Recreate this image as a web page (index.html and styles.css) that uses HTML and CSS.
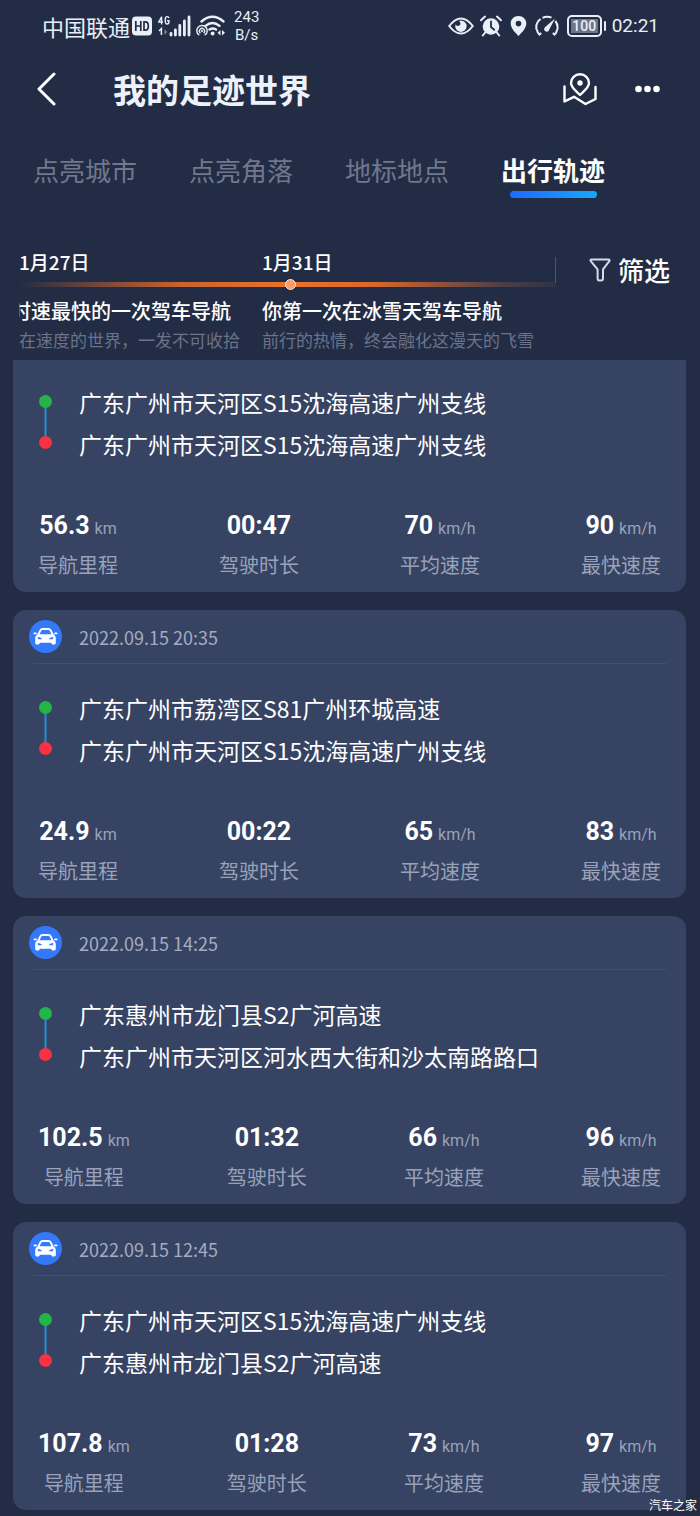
FILE: index.html
```html
<!DOCTYPE html>
<html lang="zh-CN">
<head>
<meta charset="utf-8">
<meta name="viewport" content="width=device-width, initial-scale=1">
<title>我的足迹世界</title>
<link rel="stylesheet" href="styles.css">
</head>
<body>
<svg class="sprite" aria-hidden="true">
  <symbol id="car" viewBox="0 0 33 33">
    <circle cx="16.5" cy="16.5" r="16.5" fill="#3478fb"/>
    <path d="M9 15.5 L11.2 10.6 Q12 9 13.6 9 H19.4 Q21 9 21.8 10.6 L24 15.5" fill="none" stroke="#fff" stroke-width="1.9" stroke-linejoin="round"/>
    <path d="M5.4 13.4 H7 M26 13.4 H27.6" stroke="#fff" stroke-width="1.8" stroke-linecap="round"/>
    <path fill="#fff" fill-rule="evenodd" d="M8.8 14.2 H24.2 Q26.8 15.4 26.8 18 V23 Q26.8 24.4 25.4 24.4 H23.6 Q22.4 24.4 22.2 22.8 H10.8 Q10.6 24.4 9.4 24.4 H7.6 Q6.2 24.4 6.2 23 V18 Q6.2 15.4 8.8 14.2Z M8.6 17 L9.2 19.2 H13 Q12.4 17.2 8.6 17Z M24.4 17 L23.8 19.2 H20 Q20.6 17.2 24.4 17Z"/>
  </symbol>
  <symbol id="route" viewBox="0 0 13 55">
    <path d="M6.5 8 V46" stroke="#2591cf" stroke-width="2"/>
    <circle cx="6.5" cy="6.5" r="6.5" fill="#23b548"/>
    <circle cx="6.5" cy="47.5" r="6.5" fill="#fb3041"/>
  </symbol>
</svg>

<div class="status-bar">
  <span class="carrier">中国联通</span>
  <svg class="icon-hd" viewBox="0 0 20 20" aria-label="HD"><rect x="0" y="0.5" width="20" height="19" rx="4" fill="#e9eef8"/><path d="M3.8 5 V15 M8.8 5 V15 M3.8 10 H8.8 M12 5.8 H13.4 Q16.3 5.8 16.3 10 Q16.3 14.2 13.4 14.2 H12 Z" fill="none" stroke="#222d45" stroke-width="1.7"/></svg>
  <svg class="icon-signal" viewBox="0 0 33 22" aria-label="4G">
    <path d="M3.6 9.5 V1.8 L0.8 7 H5 M11 3.2 Q10.6 1.6 9 1.6 Q7.2 1.6 7.2 5.3 Q7.2 9 9 9 Q11 9 11 6.8 V5.8 H9" fill="none" stroke="#e9eef8" stroke-width="1.4"/>
    <path d="M1 16 L3.4 13.6 V20" fill="none" stroke="#e9eef8" stroke-width="1.5"/><path d="M6.5 14 V20 L9.3 17Z" fill="#76809a"/>
    <path d="M13 18.5 V20 M17.4 15 V20 M21.8 10.5 V20 M26.4 6 V20 M31 2 V20" stroke="#e9eef8" stroke-width="2.8" stroke-linecap="round"/>
  </svg>
  <svg class="icon-wifi" viewBox="0 0 30 22" aria-hidden="true">
    <g fill="none" stroke="#e9eef8" stroke-linecap="round"><path d="M5.5 6.5 Q16.5 -2.8 27.5 6.5 M9.5 10.8 Q16.5 5 23.5 10.8 M13.5 14.5 Q16.8 12.4 20 14.5" stroke-width="2.4"/><path d="M2.8 19.8 A5.2 5.2 0 1 1 9.2 19.8 M4 17.7 A2.6 2.6 0 1 1 8 17.7" stroke-width="1.4"/></g>
    <circle cx="6" cy="16" r="1.1" fill="#e9eef8"/><circle cx="16.6" cy="18.5" r="2" fill="#e9eef8"/><path d="M24.5 15 V20.5 L21.5 17.8Z M26 15 V20.5 L29 17.8Z" fill="#e9eef8"/>
  </svg>
  <span class="net-speed">243<br>B/s</span>
  <div class="status-right">
    <svg class="icon-eye" viewBox="0 0 26 20" aria-hidden="true"><path d="M1.2 10 Q7 2.4 13 2.4 T24.8 10 Q19 17.6 13 17.6 T1.2 10Z" fill="none" stroke="#e9eef8" stroke-width="2"/><path d="M13 4.5 A5.7 5.7 0 1 1 7.5 8.5 Q8.5 10.4 10.8 9.8 Q12.9 9.2 12.4 7 Q12 5.3 11 5Z" fill="#e9eef8"/></svg>
    <svg class="icon-alarm" viewBox="0 0 22 22" aria-hidden="true"><circle cx="11" cy="11.5" r="8.3" fill="#e9eef8"/><path d="M1 5.2 L5 1.6 M21 5.2 L17 1.6 M5.2 17.5 L2.8 20.5 M16.8 17.5 L19.2 20.5" stroke="#e9eef8" stroke-width="2" stroke-linecap="round"/><path d="M11 6.5 V12 L14.2 14.8" fill="none" stroke="#222d45" stroke-width="1.8" stroke-linecap="round"/></svg>
    <svg class="icon-pin" viewBox="0 0 17 22" aria-hidden="true"><path fill="#e9eef8" fill-rule="evenodd" d="M8.5 1 C13 1 16.3 4.3 16.3 8.6 C16.3 13.4 11.5 18 8.5 21 C5.5 18 0.7 13.4 0.7 8.6 C0.7 4.3 4 1 8.5 1Z M8.5 5.8 A2.8 2.8 0 1 0 8.5 11.4 A2.8 2.8 0 1 0 8.5 5.8Z"/></svg>
    <svg class="icon-gauge" viewBox="0 0 24 22" aria-hidden="true"><path d="M16.5 2.6 A10.6 10.6 0 0 0 7.5 2.8 M5.6 4 A10.6 10.6 0 0 0 1.5 14.5 M1.8 14.5 Q2.4 17.6 4.4 19.6 L6.2 18 M20.3 6 A10.4 10.4 0 0 1 22.4 14.5 M22.2 14.5 Q21.6 17.6 19.6 19.6 L17.8 18" fill="none" stroke="#e9eef8" stroke-width="2"/><path d="M20 3.5 L14.3 14.6 A2.6 2.6 0 1 1 10.2 12Z" fill="#e9eef8"/></svg>
    <span class="battery"><span class="battery-level">100</span></span>
    <time class="clock">02:21</time>
  </div>
</div>

<header class="app-header">
  <button class="icon-button" aria-label="返回"><svg class="icon-back" viewBox="0 0 19 34"><path d="M17 2 L2 17 L17 32" fill="none" stroke="#fff" stroke-width="3" stroke-linecap="round" stroke-linejoin="round"/></svg></button>
  <h1 class="page-title">我的足迹世界</h1>
  <button class="icon-button" aria-label="地图"><svg class="icon-map" viewBox="0 0 34 33"><g fill="none" stroke="#fff" stroke-width="2.4" stroke-linecap="round" stroke-linejoin="round"><path d="M17 22 C13 18 8 14.5 8 10 A9 8.7 0 0 1 26 10 C26 14.5 21 18 17 22Z"/><path d="M1.5 13.5 V28.5 L11 23.8 L22.5 31 L32.5 26 V14"/></g><circle cx="17" cy="10" r="2.7" fill="#fff"/></svg></button>
  <button class="icon-button" aria-label="更多"><svg class="icon-more" viewBox="0 0 25 8"><circle cx="3.5" cy="4" r="3.3" fill="#fff"/><circle cx="12.5" cy="4" r="3.3" fill="#fff"/><circle cx="21.5" cy="4" r="3.3" fill="#fff"/></svg></button>
</header>

<nav class="tabs">
  <button class="tab">点亮城市</button>
  <button class="tab">点亮角落</button>
  <button class="tab">地标地点</button>
  <button class="tab tab-active" aria-current="page">出行轨迹</button>
</nav>

<section class="highlights">
  <div class="timeline">
    <div class="dates"><time>1月27日</time><time>1月31日</time></div>
    <div class="track"><span class="track-dot"></span></div>
    <div class="moments">
      <article class="moment moment-past"><h2 class="moment-title"><span>时速最快的一次驾车导航</span></h2><p class="moment-note">在速度的世界，一发不可收拾</p></article>
      <article class="moment"><h2 class="moment-title">你第一次在冰雪天驾车导航</h2><p class="moment-note">前行的热情，终会融化这漫天的飞雪</p></article>
    </div>
  </div>
  <button class="filter"><svg class="icon-filter" viewBox="0 0 22 24" aria-hidden="true"><path d="M2.6 1.5 H19.4 Q21.2 1.5 20.3 3.2 L14 11.4 V20.5 Q14 22.4 12 22.4 H10.4 Q8.6 22.4 8.6 20.5 V11.4 L1.8 3.2 Q0.8 1.5 2.6 1.5Z" fill="none" stroke="#d5daea" stroke-width="2" stroke-linejoin="round"/></svg>筛选</button>
</section>

<main class="trips">
  <article class="trip trip-clipped">
    <div class="route"><svg class="route-mark" aria-hidden="true"><use href="#route"/></svg><div class="places"><p>广东广州市天河区S15沈海高速广州支线</p><p>广东广州市天河区S15沈海高速广州支线</p></div></div>
    <dl class="stats">
      <div class="stat"><dt>导航里程</dt><dd>56.3<small>km</small></dd></div>
      <div class="stat"><dt>驾驶时长</dt><dd>00:47</dd></div>
      <div class="stat"><dt>平均速度</dt><dd>70<small>km/h</small></dd></div>
      <div class="stat"><dt>最快速度</dt><dd>90<small>km/h</small></dd></div>
    </dl>
  </article>
  <article class="trip">
    <div class="trip-head"><svg class="icon-car" aria-hidden="true"><use href="#car"/></svg><time>2022.09.15 20:35</time></div>
    <div class="route"><svg class="route-mark" aria-hidden="true"><use href="#route"/></svg><div class="places"><p>广东广州市荔湾区S81广州环城高速</p><p>广东广州市天河区S15沈海高速广州支线</p></div></div>
    <dl class="stats">
      <div class="stat"><dt>导航里程</dt><dd>24.9<small>km</small></dd></div>
      <div class="stat"><dt>驾驶时长</dt><dd>00:22</dd></div>
      <div class="stat"><dt>平均速度</dt><dd>65<small>km/h</small></dd></div>
      <div class="stat"><dt>最快速度</dt><dd>83<small>km/h</small></dd></div>
    </dl>
  </article>
  <article class="trip">
    <div class="trip-head"><svg class="icon-car" aria-hidden="true"><use href="#car"/></svg><time>2022.09.15 14:25</time></div>
    <div class="route"><svg class="route-mark" aria-hidden="true"><use href="#route"/></svg><div class="places"><p>广东惠州市龙门县S2广河高速</p><p>广东广州市天河区河水西大街和沙太南路路口</p></div></div>
    <dl class="stats">
      <div class="stat"><dt>导航里程</dt><dd>102.5<small>km</small></dd></div>
      <div class="stat"><dt>驾驶时长</dt><dd>01:32</dd></div>
      <div class="stat"><dt>平均速度</dt><dd>66<small>km/h</small></dd></div>
      <div class="stat"><dt>最快速度</dt><dd>96<small>km/h</small></dd></div>
    </dl>
  </article>
  <article class="trip">
    <div class="trip-head"><svg class="icon-car" aria-hidden="true"><use href="#car"/></svg><time>2022.09.15 12:45</time></div>
    <div class="route"><svg class="route-mark" aria-hidden="true"><use href="#route"/></svg><div class="places"><p>广东广州市天河区S15沈海高速广州支线</p><p>广东惠州市龙门县S2广河高速</p></div></div>
    <dl class="stats">
      <div class="stat"><dt>导航里程</dt><dd>107.8<small>km</small></dd></div>
      <div class="stat"><dt>驾驶时长</dt><dd>01:28</dd></div>
      <div class="stat"><dt>平均速度</dt><dd>73<small>km/h</small></dd></div>
      <div class="stat"><dt>最快速度</dt><dd>97<small>km/h</small></dd></div>
    </dl>
  </article>
</main>
<span class="watermark">汽车之家</span>
</body>
</html>
```

FILE: styles.css
```css
* { box-sizing: border-box; margin: 0; padding: 0; }

body {
  position: relative;
  min-height: 100vh;
  background: #222d45;
  color: #fff;
  font-family: "Noto Sans CJK SC", "Noto Sans", sans-serif;
}

button {
  border: 0;
  background: none;
  color: inherit;
  font: inherit;
  cursor: pointer;
}

svg { display: block; flex: none; }
.sprite { position: absolute; width: 0; height: 0; }

/* Status bar */
.status-bar {
  display: flex;
  align-items: center;
  height: 52px;
  padding: 0 41px 0 42px;
  color: #e9eef8;
}
.carrier { font-size: 22px; line-height: 32px; }
.icon-hd { width: 20px; height: 20px; margin-left: 2px; }
.icon-signal { width: 33px; height: 22px; margin-left: 6px; }
.icon-wifi { width: 30px; height: 22px; margin-left: 5px; }
.net-speed {
  margin-left: 8px;
  font-family: Roboto, sans-serif;
  font-size: 15px;
  line-height: 18px;
  text-align: center;
}
.status-right { display: flex; align-items: center; margin-left: auto; }
.icon-eye { width: 26px; height: 20px; }
.icon-alarm { width: 22px; height: 22px; margin-left: 6px; }
.icon-pin { width: 17px; height: 22px; margin-left: 8px; }
.icon-gauge { width: 24px; height: 22px; margin-left: 8px; }
.battery {
  position: relative;
  margin-left: 8px;
  padding: 2px;
  border: 2px solid #e9eef8;
  border-radius: 5px;
}
.battery::after {
  content: "";
  position: absolute;
  top: 4px;
  right: -6px;
  width: 2px;
  height: 10px;
  border-radius: 1px;
  background: #e9eef8;
}
.battery-level {
  display: block;
  width: 27px;
  background: #6c758a;
  font: 500 14px/14px Roboto, sans-serif;
  text-align: center;
}
.clock { margin-left: 10px; font: 19px/24px Roboto, sans-serif; }

/* Header */
.app-header {
  display: flex;
  align-items: center;
  height: 74px;
  padding: 0 40px 0 37px;
}
.icon-back { width: 19px; height: 34px; }
.icon-map { width: 34px; height: 33px; }
.icon-more { width: 25px; height: 8px; margin-left: 38px; }
.page-title {
  flex: 1;
  margin-left: 57px;
  color: #edf1fc;
  font-size: 33px;
  line-height: 48px;
}

/* Tabs */
.tabs { display: flex; gap: 52px; padding: 26px 33px 0; }
.tab {
  display: flex;
  flex-direction: column;
  align-items: center;
  gap: 3px;
  color: #6f788d;
  font-size: 26px;
  line-height: 36px;
  white-space: nowrap;
}
.tab-active { color: #fff; font-weight: 700; }
.tab-active::after {
  content: "";
  width: 87px;
  height: 7px;
  border-radius: 4px;
  background: linear-gradient(90deg, #1f69fb, #19a7fb);
}

/* Timeline */
.highlights { display: flex; align-items: flex-start; padding: 52px 30px 6px 19px; }
.timeline { flex: 1; }
.dates,
.moments { display: grid; grid-template-columns: 243px 1fr; }
.dates { font-size: 19px; font-weight: 500; line-height: 24px; }
.track {
  position: relative;
  height: 5px;
  margin-top: 8px;
  background: linear-gradient(90deg, #222d45, #c8622f 30%, #e8732b 50%, #d9682a 66%, #4d3f49 90%, #2f3446);
}
.track-dot {
  position: absolute;
  top: -3px;
  left: 266px;
  width: 11px;
  height: 11px;
  border: 1px solid #ffe2d0;
  border-radius: 50%;
  background: #f99b6b;
}
.moments { padding-top: 9px; }
.moment { white-space: nowrap; }
.moment-title { font-size: 20px; font-weight: 500; line-height: 30px; }
.moment-past .moment-title {
  display: flex;
  justify-content: flex-end;
  width: 212px;
  overflow: hidden;
}
.moment-note { color: #6a7389; font-size: 17px; line-height: 28px; }
.filter {
  display: flex;
  align-items: center;
  gap: 7px;
  margin-top: 1px;
  font-size: 26px;
  font-weight: 500;
  line-height: 38px;
}
.highlights .filter::before {
  content: "";
  align-self: center;
  width: 1px;
  height: 26px;
  margin-right: 26px;
  background: #4b556c;
}
.icon-filter { width: 22px; height: 24px; }

/* Trips */
.trips { display: flex; flex-direction: column; gap: 18px; padding: 0 14px 5px 13px; }
.trip { padding-bottom: 8px; border-radius: 13px; background: #374362; }
.trip-clipped { padding-top: 21px; border-radius: 0 0 13px 13px; }
.trip-head {
  display: flex;
  align-items: center;
  gap: 17px;
  height: 53px;
  padding-left: 16px;
  color: #a3acc1;
  font-size: 18px;
  line-height: 26px;
}
.icon-car { width: 33px; height: 33px; }
.trip-head + .route::before {
  content: "";
  grid-column: 1 / -1;
  height: 1px;
  margin: 0 20px 23px;
  background: #445070;
}
.route { display: grid; grid-template-columns: 66px 1fr; }
.route-mark { width: 13px; height: 55px; margin: 14px 0 0 26px; }
.places { font-size: 23px; line-height: 42px; }
.stats { display: flex; justify-content: space-between; padding: 41px 25px 0; }
.stat { display: flex; flex-direction: column-reverse; align-items: center; }
.stat dt { color: #98a2ba; font-size: 20px; line-height: 38px; }
.stat dd { font: 700 25px/40px Roboto, sans-serif; }
.stat small {
  margin-left: 5px;
  color: #98a2ba;
  font-size: 16px;
  font-weight: 400;
  line-height: 1;
}

.watermark {
  position: absolute;
  right: 3px;
  bottom: 2px;
  font-size: 12px;
  line-height: 18px;
}
```
